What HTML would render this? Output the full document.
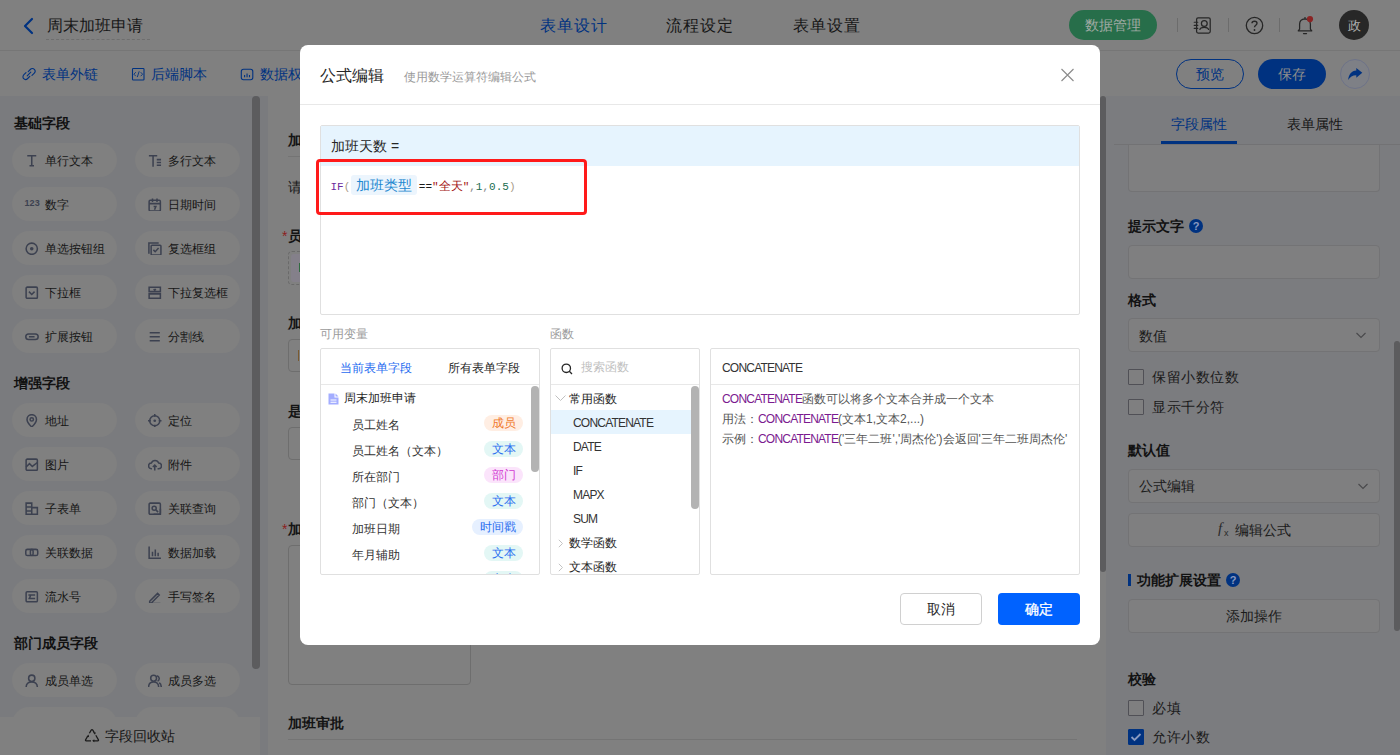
<!DOCTYPE html>
<html><head><meta charset="utf-8">
<style>
*{box-sizing:border-box;margin:0;padding:0}
html,body{width:1400px;height:755px;overflow:hidden;background:#808080;font-family:"Liberation Sans",sans-serif;color:#141414}
.a{position:absolute}
.t{position:absolute;white-space:nowrap;line-height:1}
/* header */
#hdr{left:0;top:0;width:1400px;height:51px;background:#808080;border-bottom:1px solid #767676}
#tb{left:0;top:51px;width:1400px;height:45px;background:#808080}
#lp{left:0;top:96px;width:268px;height:659px;background:#7a7b7e}
#cv{left:268px;top:96px;width:832px;height:659px;background:#808080}
#rp{left:1106px;top:96px;width:294px;height:659px;background:#7b7c7f}
.pill{position:absolute;width:105px;height:34px;border-radius:17px;background:#808080}
.pill .ic{position:absolute;left:13px;top:10.5px;width:13.5px;height:13.5px}
.pill .lb{position:absolute;left:33px;top:1px;line-height:34px;font-size:12px;color:#161616;white-space:nowrap}
.sh{position:absolute;left:14px;font-size:14px;font-weight:bold;color:#111;line-height:1}
.inp{position:absolute;left:1128px;width:252px;border:1px solid #737375;border-radius:4px;background:#7f7f80}
.rl{position:absolute;left:1128px;font-size:14px;font-weight:bold;color:#121212;line-height:1;white-space:nowrap}
.cb{position:absolute;left:1128px;width:16px;height:16px;border:1px solid #505056;border-radius:1px;background:#7f7f80}
.cbl{position:absolute;left:1152px;font-size:14px;color:#1a1a1a;line-height:1;white-space:nowrap;letter-spacing:0.5px}
#mask{left:0;top:0;width:1400px;height:755px}
/* modal */
#modal{left:300px;top:45px;width:800px;height:600px;background:#fff;border-radius:8px;overflow:hidden}
#modal .t{color:#262626}
.box{position:absolute;border:1px solid #e0e0e0;border-radius:2px;background:#fff}
.tag{position:absolute;right:16px;height:16px;border-radius:8px;font-size:12px;line-height:17px;padding:0 7.5px;white-space:nowrap}
.vr{position:absolute;left:31px;margin-top:1px;font-size:12px;line-height:1;color:#333;white-space:nowrap}
.fr{position:absolute;left:22px;font-size:12px;line-height:1;color:#333;white-space:nowrap;letter-spacing:-0.8px}
.mono{font-family:"Liberation Mono",monospace}
.fm{position:relative;top:2px}
</style></head><body>
<div class="a" id="hdr"></div>
<div class="a" id="tb"></div>
<div class="a" id="lp"></div>
<div class="a" id="cv"></div>
<div class="a" id="rp"></div>

<!-- header content -->
<svg class="a" style="left:20px;top:16px" width="16" height="20" viewBox="0 0 16 20"><path d="M12 3 L5 10 L12 17" fill="none" stroke="#003280" stroke-width="2.2" stroke-linecap="round" stroke-linejoin="round"/></svg>
<div class="t" style="left:47px;top:18px;font-size:16px;color:#161616">周末加班申请</div>
<div class="a" style="left:46px;top:39px;width:104px;border-top:1px dashed #6e6e6e"></div>
<div class="t" style="left:540px;top:18px;font-size:16px;color:#003280;letter-spacing:0.9px">表单设计</div>
<div class="t" style="left:666px;top:18px;font-size:16px;color:#161616;letter-spacing:0.9px">流程设定</div>
<div class="t" style="left:793px;top:18px;font-size:16px;color:#161616;letter-spacing:0.9px">表单设置</div>
<div class="a" style="left:1069px;top:10px;width:88px;height:30px;border-radius:15px;background:#276e4a"></div>
<div class="t" style="left:1085px;top:17.5px;font-size:14px;color:#a0aaa4">数据管理</div>
<div class="a" style="left:1177px;top:18px;width:1px;height:14px;background:#6c6c6c"></div>
<div class="a" style="left:1228px;top:18px;width:1px;height:14px;background:#6c6c6c"></div>
<div class="a" style="left:1279px;top:18px;width:1px;height:14px;background:#6c6c6c"></div>
<svg class="a" style="left:1192px;top:16px" width="20" height="19" viewBox="0 0 20 19"><rect x="4.6" y="1.8" width="13.6" height="15.2" rx="1.5" fill="none" stroke="#262626" stroke-width="1.25"/><circle cx="12.3" cy="7.5" r="2.9" fill="none" stroke="#262626" stroke-width="1.25"/><path d="M7.8 14 C8.2 10.6 16.2 10.6 16.6 14" fill="none" stroke="#262626" stroke-width="1.25"/><path d="M2.2 6.3h3.6M2.2 9.4h3.6M2.2 12.4h3.6" stroke="#262626" stroke-width="1.1" stroke-linecap="round"/></svg>
<svg class="a" style="left:1245px;top:16px" width="20" height="19" viewBox="0 0 20 19"><circle cx="9.5" cy="9.5" r="8.2" fill="none" stroke="#262626" stroke-width="1.3"/><path d="M7 7.3 C7 4.5 12 4.5 12 7.3 C12 9.2 9.5 9.3 9.5 11.3" fill="none" stroke="#262626" stroke-width="1.4"/><circle cx="9.5" cy="14" r="0.9" fill="#262626"/></svg>
<svg class="a" style="left:1296px;top:14px" width="20" height="22" viewBox="0 0 20 22"><path d="M2.2 16.8 L3.6 15.2 L3.6 10.3 C3.6 7 5.8 5 9 4.8 C12.2 5 14.4 7 14.4 10.3 L14.4 15.2 L15.8 16.8 Z" fill="none" stroke="#262626" stroke-width="1.25" stroke-linejoin="round"/><path d="M9 3 v1.8" stroke="#262626" stroke-width="1.2"/><path d="M7.5 19.5 h3" stroke="#262626" stroke-width="1.25" stroke-linecap="round"/><circle cx="14" cy="5.1" r="3.1" fill="#8a2424"/></svg>
<div class="a" style="left:1339px;top:10px;width:30px;height:30px;border-radius:15px;background:#272727"></div>
<div class="t" style="left:1347.5px;top:18.5px;font-size:13px;color:#b0b0b0">政</div>
<!-- toolbar -->
<svg class="a" style="left:22px;top:67px" width="14" height="14" viewBox="0 0 14 14"><path d="M6.2 4.6 L8.3 2.5 C9.5 1.3 11.3 1.3 12.3 2.3 C13.3 3.3 13.3 5.1 12.1 6.3 L10 8.4 M7.8 9.4 L5.7 11.5 C4.5 12.7 2.7 12.7 1.7 11.7 C0.7 10.7 0.7 8.9 1.9 7.7 L4 5.6 M5.2 8.8 L8.8 5.2" fill="none" stroke="#003280" stroke-width="1.1" stroke-linecap="round"/></svg>
<div class="t" style="left:42px;top:67px;font-size:14px;color:#003280">表单外链</div>
<svg class="a" style="left:131px;top:67px" width="14" height="14" viewBox="0 0 14 14"><rect x="1.5" y="1.5" width="11.5" height="11.5" rx="0.8" fill="none" stroke="#003280" stroke-width="1.1"/><path d="M4.8 5.2 L2.9 7.2 L4.8 9.2 M9.7 5.2 L11.6 7.2 L9.7 9.2 M8.2 4.3 L6.3 10.1" fill="none" stroke="#003280" stroke-width="0.9"/></svg>
<div class="t" style="left:151px;top:67px;font-size:14px;color:#003280">后端脚本</div>
<svg class="a" style="left:240px;top:68px" width="14" height="13" viewBox="0 0 14 13"><rect x="1.3" y="1.3" width="11.5" height="10.5" rx="2.2" fill="none" stroke="#003280" stroke-width="1.1"/><path d="M4.6 9.2 v-2.2 M7.05 9.2 v-3.8 M9.5 9.2 v-2.2" stroke="#003280" stroke-width="1.1"/></svg>
<div class="t" style="left:260px;top:67px;font-size:14px;color:#003280">数据权限</div>
<div class="a" style="left:1176px;top:59px;width:68px;height:30px;border-radius:15px;border:1px solid #003280"></div>
<div class="t" style="left:1196px;top:66.5px;font-size:14px;color:#003280">预览</div>
<div class="a" style="left:1258px;top:59px;width:68px;height:30px;border-radius:15px;background:#003280"></div>
<div class="t" style="left:1278px;top:66.5px;font-size:14px;color:#8c8c8c">保存</div>
<div class="a" style="left:1340px;top:59px;width:30px;height:30px;border-radius:15px;background:#7e8086;border:1px solid #6e7388"></div>
<svg class="a" style="left:1346px;top:65px" width="18" height="18" viewBox="0 0 18 18"><path d="M10.3 2.9 L16.3 7.8 L10.3 12.8 L10.3 10.2 C6.5 10.2 4 11.8 2.2 15 C2.6 9.5 5.5 5.8 10.3 5.5 Z" fill="#003280"/></svg>


<!-- left panel -->
<div class="sh" style="top:116px">基础字段</div>
<div class="sh" style="top:376px">增强字段</div>
<div class="sh" style="top:636px">部门成员字段</div>
<div class="pill" style="left:12px;top:143px"><svg class="ic" viewBox="0 0 12 12"><path d="M2 1.5h8M6 1.5v9M4 10.5h4" fill="none" stroke="#3c4150" stroke-width="1.35"/></svg><div class="lb">单行文本</div></div>
<div class="pill" style="left:135px;top:143px"><svg class="ic" viewBox="0 0 12 12"><path d="M0.8 1.5h7.4M4.5 1.5v9.8M7.8 5h3.8M7.8 7.5h3.8M7.8 10h3.8" fill="none" stroke="#3c4150" stroke-width="1.35"/></svg><div class="lb">多行文本</div></div>
<div class="pill" style="left:12px;top:187px"><div style="position:absolute;left:12.5px;top:12px;font-size:9px;font-weight:bold;line-height:9px;color:#3c4150;letter-spacing:0.1px">123</div><div class="lb">数字</div></div>
<div class="pill" style="left:135px;top:187px"><svg class="ic" viewBox="0 0 12 12"><rect x="1" y="2" width="10" height="9.5" rx="1" fill="none" stroke="#3c4150" stroke-width="1.35"/><path d="M1 5h10M4 0.5v3M8 0.5v3M5 7.5h2l-1.2 3" fill="none" stroke="#3c4150" stroke-width="1.35"/></svg><div class="lb">日期时间</div></div>
<div class="pill" style="left:12px;top:231px"><svg class="ic" viewBox="0 0 12 12"><circle cx="6" cy="6" r="5" fill="none" stroke="#3c4150" stroke-width="1.35"/><circle cx="6" cy="6" r="1.6" fill="#3c4150"/></svg><div class="lb">单选按钮组</div></div>
<div class="pill" style="left:135px;top:231px"><svg class="ic" viewBox="0 0 12 12"><path d="M0.8 10.5V0.8H9.5" fill="none" stroke="#3c4150" stroke-width="1.35"/><rect x="2.8" y="2.8" width="8.7" height="8.7" rx="0.8" fill="none" stroke="#3c4150" stroke-width="1.35"/><path d="M4.8 7l1.6 1.6 3-3.2" fill="none" stroke="#3c4150" stroke-width="1.35"/></svg><div class="lb">复选框组</div></div>
<div class="pill" style="left:12px;top:275px"><svg class="ic" viewBox="0 0 12 12"><rect x="1" y="1" width="10" height="10" rx="1" fill="none" stroke="#3c4150" stroke-width="1.35"/><path d="M3.5 5l2.5 2.5 2.5-2.5" fill="none" stroke="#3c4150" stroke-width="1.35"/></svg><div class="lb">下拉框</div></div>
<div class="pill" style="left:135px;top:275px"><svg class="ic" viewBox="0 0 12 12"><path d="M1 1.2h10v3.8H1zM1 7h10v4H1z" fill="none" stroke="#3c4150" stroke-width="1.35"/><path d="M5 2.8l1 1 1-1" fill="none" stroke="#3c4150" stroke-width="1.35"/></svg><div class="lb">下拉复选框</div></div>
<div class="pill" style="left:12px;top:319px"><svg class="ic" viewBox="0 0 12 12"><rect x="0.7" y="3.5" width="11" height="5" rx="2.5" fill="none" stroke="#3c4150" stroke-width="1.35"/><path d="M3.5 6h5" fill="none" stroke="#3c4150" stroke-width="1.35"/></svg><div class="lb">扩展按钮</div></div>
<div class="pill" style="left:135px;top:319px"><svg class="ic" viewBox="0 0 12 12"><path d="M1.5 2.5h9M1.5 6h9M1.5 9.5h9" fill="none" stroke="#3c4150" stroke-width="1.35"/></svg><div class="lb">分割线</div></div>
<div class="pill" style="left:12px;top:403px"><svg class="ic" viewBox="0 0 12 12"><path d="M6 11.5C6 11.5 1.8 7.5 1.8 4.8A4.2 4.2 0 0 1 10.2 4.8C10.2 7.5 6 11.5 6 11.5Z" fill="none" stroke="#3c4150" stroke-width="1.35"/><circle cx="6" cy="4.8" r="1.5" fill="none" stroke="#3c4150" stroke-width="1.35"/></svg><div class="lb">地址</div></div>
<div class="pill" style="left:135px;top:403px"><svg class="ic" viewBox="0 0 12 12"><circle cx="6" cy="6" r="4.5" fill="none" stroke="#3c4150" stroke-width="1.35"/><circle cx="6" cy="6" r="1.2" fill="#3c4150"/><path d="M6 0v2.5M6 9.5V12M0 6h2.5M9.5 6H12" fill="none" stroke="#3c4150" stroke-width="1.35"/></svg><div class="lb">定位</div></div>
<div class="pill" style="left:12px;top:447px"><svg class="ic" viewBox="0 0 12 12"><rect x="1" y="1" width="10" height="10" rx="1" fill="none" stroke="#3c4150" stroke-width="1.35"/><path d="M1 8l3-3 2.5 2.5L11 4" fill="none" stroke="#3c4150" stroke-width="1.35"/></svg><div class="lb">图片</div></div>
<div class="pill" style="left:135px;top:447px"><svg class="ic" viewBox="0 0 12 12"><path d="M3.5 9.5H3A2.5 2.5 0 0 1 3 4.5 3.5 3.5 0 0 1 9.5 4.5 2.5 2.5 0 0 1 9.5 9.5H8.5M6 11V6.5M4.3 8L6 6.3 7.7 8" fill="none" stroke="#3c4150" stroke-width="1.35"/></svg><div class="lb">附件</div></div>
<div class="pill" style="left:12px;top:491px"><svg class="ic" viewBox="0 0 12 12"><path d="M1 1h5v10H1zM6 5h5v6H6M1 4.5h5M1 8h5" fill="none" stroke="#3c4150" stroke-width="1.35"/></svg><div class="lb">子表单</div></div>
<div class="pill" style="left:135px;top:491px"><svg class="ic" viewBox="0 0 12 12"><rect x="1" y="1" width="10" height="10" rx="1" fill="none" stroke="#3c4150" stroke-width="1.35"/><circle cx="5.5" cy="5.5" r="1.8" fill="none" stroke="#3c4150" stroke-width="1.35"/><path d="M7 7l2 2M5 11h6V6" fill="none" stroke="#3c4150" stroke-width="1.35"/></svg><div class="lb">关联查询</div></div>
<div class="pill" style="left:12px;top:535px"><svg class="ic" viewBox="0 0 12 12"><rect x="0.7" y="3" width="6.5" height="5.5" rx="1.5" fill="none" stroke="#3c4150" stroke-width="1.35"/><rect x="4.8" y="3" width="6.5" height="5.5" rx="1.5" fill="none" stroke="#3c4150" stroke-width="1.35"/></svg><div class="lb">关联数据</div></div>
<div class="pill" style="left:135px;top:535px"><svg class="ic" viewBox="0 0 12 12"><path d="M1 0.5V11H11.5M4 9V5M6.5 9V3M9 9V6" fill="none" stroke="#3c4150" stroke-width="1.35"/></svg><div class="lb">数据加载</div></div>
<div class="pill" style="left:12px;top:579px"><svg class="ic" viewBox="0 0 12 12"><rect x="1" y="1.5" width="10" height="9" rx="1" fill="none" stroke="#3c4150" stroke-width="1.35"/><path d="M3 4.5h6M3 7.5h6M5 4.5l-1 3" fill="none" stroke="#3c4150" stroke-width="1.35"/></svg><div class="lb">流水号</div></div>
<div class="pill" style="left:135px;top:579px"><svg class="ic" viewBox="0 0 12 12"><path d="M1.5 10L8.5 3 10 4.5 3 11.5H1.5ZM1 12h10" fill="none" stroke="#3c4150" stroke-width="1.35"/></svg><div class="lb">手写签名</div></div>
<div class="pill" style="left:12px;top:663px"><svg class="ic" viewBox="0 0 12 12"><circle cx="6" cy="3.8" r="2.8" fill="none" stroke="#3c4150" stroke-width="1.35"/><path d="M1 12C1 8.5 3 7.2 6 7.2S11 8.5 11 12" fill="none" stroke="#3c4150" stroke-width="1.35"/></svg><div class="lb">成员单选</div></div>
<div class="pill" style="left:135px;top:663px"><svg class="ic" viewBox="0 0 12 12"><circle cx="5" cy="3.8" r="2.6" fill="none" stroke="#3c4150" stroke-width="1.35"/><path d="M0.5 12C0.5 8.8 2.2 7.2 5 7.2S9.5 8.8 9.5 12M7.8 1.5A2.6 2.6 0 0 1 8.5 6.4M10 7.8C11.3 8.5 11.8 10 11.8 12" fill="none" stroke="#3c4150" stroke-width="1.35"/></svg><div class="lb">成员多选</div></div>
<div class="pill" style="left:12px;top:707px"><svg class="ic" viewBox="0 0 12 12"><circle cx="6" cy="3.8" r="2.8" fill="none" stroke="#3c4150" stroke-width="1.35"/><path d="M1 12C1 8.5 3 7.2 6 7.2S11 8.5 11 12" fill="none" stroke="#3c4150" stroke-width="1.35"/></svg><div class="lb">部门单选</div></div>
<div class="pill" style="left:135px;top:707px"><svg class="ic" viewBox="0 0 12 12"><circle cx="5" cy="3.8" r="2.6" fill="none" stroke="#3c4150" stroke-width="1.35"/><path d="M0.5 12C0.5 8.8 2.2 7.2 5 7.2S9.5 8.8 9.5 12M7.8 1.5A2.6 2.6 0 0 1 8.5 6.4M10 7.8C11.3 8.5 11.8 10 11.8 12" fill="none" stroke="#3c4150" stroke-width="1.35"/></svg><div class="lb">部门多选</div></div>
<div class="a" style="left:252px;top:96px;width:8px;height:573px;border-radius:4px;background:#5c5c5e"></div>
<div class="a" style="left:0;top:717px;width:260px;height:38px;background:#808080"></div>
<svg class="a" style="left:84px;top:727px" width="16" height="16" viewBox="0 0 16 16"><path d="M7 13.8 H2.3 Q1 13.8 1.7 12.6 L3.8 9 M5.4 6.3 L7.2 3.1 Q8 1.9 8.8 3.1 L10.4 5.9 M11.8 8.3 L14.3 12.6 Q15 13.8 13.7 13.8 H9.5" fill="none" stroke="#1a1a1a" stroke-width="1.25"/><path d="M2.6 9.6 L4.6 7.6 L5.1 10.3Z M9.2 5.6 L11.9 5.6 L11 7.8Z M10.3 12.3 L10.3 15.3 L8.2 13.8Z" fill="#1a1a1a"/></svg>
<div class="t" style="left:105px;top:729px;font-size:14px;color:#161616">字段回收站</div>

<!-- center canvas -->
<div class="t" style="left:288px;top:133px;font-size:14px;font-weight:bold;color:#141414">加班申请</div>
<div class="a" style="left:288px;top:156px;width:812px;height:1px;background:#747474"></div>
<div class="t" style="left:288px;top:180px;font-size:14px;color:#1a1a1a">请填写</div>
<div class="t" style="left:282px;top:229px;font-size:14px;color:#8c2020">*</div>
<div class="t" style="left:288px;top:229px;font-size:14px;font-weight:bold;color:#141414">员工姓名</div>
<div class="a" style="left:288px;top:251px;width:180px;height:34px;border:1px dashed #6a6a6a;border-radius:4px"></div>
<div class="a" style="left:291px;top:254px;width:60px;height:28px;border-radius:3px;background:#84808a"></div>
<div class="a" style="left:298.5px;top:263px;width:2px;height:9px;background:#2f6a40"></div>
<div class="t" style="left:288px;top:316px;font-size:14px;font-weight:bold;color:#141414">加班日期</div>
<div class="a" style="left:288px;top:339px;width:180px;height:33px;border:1px solid #6e6e6e;border-radius:4px"></div>
<div class="a" style="left:298px;top:350px;width:1px;height:11px;background:#7a5a30"></div>
<div class="t" style="left:288px;top:404px;font-size:14px;font-weight:bold;color:#141414">是否</div>
<div class="a" style="left:288px;top:427px;width:180px;height:33px;border:1px solid #6e6e6e;border-radius:4px"></div>
<div class="t" style="left:282px;top:522px;font-size:14px;color:#8c2020">*</div>
<div class="t" style="left:288px;top:522px;font-size:14px;font-weight:bold;color:#141414">加班原因</div>
<div class="a" style="left:288px;top:545px;width:183px;height:140px;border:1px solid #6e6e6e;border-radius:4px"></div>
<div class="t" style="left:288px;top:716px;font-size:14px;font-weight:bold;color:#141414">加班审批</div>
<div class="a" style="left:288px;top:739px;width:789px;height:1px;background:#747474"></div>
<div class="a" style="left:1100px;top:96px;width:6px;height:476px;border-radius:3px;background:#5c5c5e"></div>

<!-- right panel -->
<div class="t" style="left:1171px;top:117px;font-size:14px;color:#003280">字段属性</div>
<div class="t" style="left:1287px;top:117px;font-size:14px;color:#161616">表单属性</div>
<div class="a" style="left:1114px;top:144px;width:286px;height:1px;background:#727274"></div>
<div class="inp" style="top:130px;height:62px;border-top:none"></div>
<div class="a" style="left:1106px;top:96px;width:294px;height:48px;background:#7b7c7f"></div>
<div class="t" style="left:1171px;top:117px;font-size:14px;color:#003280">字段属性</div>
<div class="t" style="left:1287px;top:117px;font-size:14px;color:#161616">表单属性</div>
<div class="a" style="left:1114px;top:144px;width:286px;height:1px;background:#727274"></div>
<div class="a" style="left:1161px;top:141px;width:76px;height:3px;background:#003280"></div>
<div class="rl" style="top:219px">提示文字</div>
<div class="a" style="left:1189px;top:219px;width:14px;height:14px;border-radius:7px;background:#003280;color:#8a9ac0;font-size:11px;font-weight:bold;line-height:14px;text-align:center">?</div>
<div class="inp" style="top:245px;height:34px"></div>
<div class="rl" style="top:293px">格式</div>
<div class="inp" style="top:318px;height:34px"></div>
<div class="t" style="left:1139px;top:329px;font-size:14px;color:#1a1a1a">数值</div>
<svg class="a" style="left:1355px;top:330px" width="12" height="10" viewBox="0 0 12 10"><path d="M1.5 3l4.5 4.5 4.5-4.5" fill="none" stroke="#4a4a4c" stroke-width="1.2"/></svg>
<div class="cb" style="top:369px"></div>
<div class="cbl" style="top:370px">保留小数位数</div>
<div class="cb" style="top:399px"></div>
<div class="cbl" style="top:400px">显示千分符</div>
<div class="rl" style="top:443px">默认值</div>
<div class="inp" style="top:469px;height:34px"></div>
<div class="t" style="left:1139px;top:479px;font-size:14px;color:#1a1a1a">公式编辑</div>
<svg class="a" style="left:1357px;top:481px" width="12" height="10" viewBox="0 0 12 10"><path d="M1.5 3l4.5 4.5 4.5-4.5" fill="none" stroke="#4a4a4c" stroke-width="1.2"/></svg>
<div class="inp" style="top:513px;height:34px"></div>
<div class="t" style="left:1218px;top:521px;font-size:15px;font-style:italic;font-family:'Liberation Serif',serif;color:#2a2a2a">f</div><div class="t" style="left:1224px;top:529px;font-size:9px;color:#2a2a2a">x</div>
<div class="t" style="left:1235px;top:523px;font-size:14px;color:#1a1a1a">编辑公式</div>
<div class="a" style="left:1128px;top:574px;width:3px;height:12px;background:#003280"></div>
<div class="rl" style="left:1137px;top:573px">功能扩展设置</div>
<div class="a" style="left:1226px;top:573px;width:14px;height:14px;border-radius:7px;background:#003280;color:#8a9ac0;font-size:11px;font-weight:bold;line-height:14px;text-align:center">?</div>
<div class="inp" style="top:599px;height:34px"></div>
<div class="t" style="left:1226px;top:609px;font-size:14px;color:#1a1a1a">添加操作</div>
<div class="rl" style="top:672px">校验</div>
<div class="cb" style="top:700px"></div>
<div class="cbl" style="top:701px">必填</div>
<div class="cb" style="top:729px;background:#003280;border-color:#003280"></div>
<svg class="a" style="left:1128px;top:729px" width="16" height="16" viewBox="0 0 16 16"><path d="M3.5 8l3 3 6-6" fill="none" stroke="#8a9ac0" stroke-width="1.8"/></svg>
<div class="cbl" style="top:730px">允许小数</div>
<div class="a" style="left:1394px;top:341px;width:6px;height:290px;border-radius:3px;background:#5c5c5e"></div>

<div class="a" id="modal">
<div class="t" style="left:20px;top:23px;font-size:16px;color:#262626">公式编辑</div>
<div class="t" style="left:104px;top:26px;font-size:12px;color:#9a9a9a">使用数学运算符编辑公式</div>
<svg class="a" style="left:760px;top:23px" width="15" height="14" viewBox="0 0 15 14"><path d="M1.5 1L13.5 13M13.5 1L1.5 13" stroke="#8c8c8c" stroke-width="1.15"/></svg>
<div class="a" style="left:0;top:59px;width:800px;height:1px;background:#e8e8e8"></div>
<!-- formula box -->
<div class="box" style="left:20px;top:80px;width:760px;height:190px"></div>
<div class="a" style="left:21px;top:81px;width:758px;height:40px;background:#e6f4fe"></div>
<div class="t" style="left:31px;top:94px;font-size:14px;color:#262626">加班天数 =</div>
<div class="a" style="left:16px;top:114px;width:271px;height:56px;border:3px solid #ff1a1a;border-radius:4px"></div>
<div class="a mono" style="left:30.5px;top:130px;height:20px;display:flex;align-items:center;font-size:11px;white-space:nowrap;line-height:20px"><span class="fm" style="color:#6b2c9c">IF</span><span class="fm" style="color:#a89a88">(</span><span style="display:inline-block;width:66px;height:20px;border-radius:3px;background:#ecf5fd;color:#1e88d0;font-family:'Liberation Sans',sans-serif;font-size:14px;line-height:20px;padding-left:5px;margin-left:0.5px">加班类型</span><span class="fm" style="color:#1a1a1a;margin-left:2px">==</span><span class="fm" style="color:#a31212">"<span style="font-size:12px">全天</span>"</span><span class="fm" style="color:#888">,</span><span class="fm" style="color:#1a6e50">1</span><span class="fm" style="color:#888">,</span><span class="fm" style="color:#1a6e50">0.5</span><span class="fm" style="color:#a89a88">)</span></div>
<!-- variables -->
<div class="t" style="left:20px;top:283px;font-size:12px;color:#9a9a9a">可用变量</div>
<div class="box" style="left:20px;top:303px;width:220px;height:227px;overflow:hidden">
  <div class="t" style="left:19px;top:13px;font-size:12px;color:#1f6cf0">当前表单字段</div>
  <div class="t" style="left:127px;top:13px;font-size:12px;color:#262626">所有表单字段</div>
  <div class="a" style="left:0;top:35px;width:218px;height:1px;background:#e8e8e8"></div>
  <svg class="a" style="left:7px;top:44px" width="11" height="12" viewBox="0 0 11 12"><path d="M0.5 0.5H6.5V4.5H10.5V11.5H0.5Z" fill="#a3adff"/><path d="M7.5 0.5L10.5 3.5H7.5Z" fill="#a3adff"/><path d="M2.5 7h6M2.5 9.3h6" stroke="#fff" stroke-width="1.1"/></svg>
  <div class="t" style="left:23px;top:43px;font-size:12px;color:#262626">周末加班申请</div>
  <div class="vr" style="top:69px">员工姓名</div><div class="tag" style="top:66px;background:#ffeee3;color:#f07a2a">成员</div>
  <div class="vr" style="top:95px">员工姓名（文本）</div><div class="tag" style="top:92px;background:#e3f7f5;color:#2b6ff0">文本</div>
  <div class="vr" style="top:121px">所在部门</div><div class="tag" style="top:118px;background:#fbe4fb;color:#d23ad2">部门</div>
  <div class="vr" style="top:147px">部门（文本）</div><div class="tag" style="top:144px;background:#e3f7f5;color:#2b6ff0">文本</div>
  <div class="vr" style="top:173px">加班日期</div><div class="tag" style="top:170px;background:#e6f0ff;color:#2b6ff0">时间戳</div>
  <div class="vr" style="top:199px">年月辅助</div><div class="tag" style="top:196px;background:#e3f7f5;color:#2b6ff0">文本</div>
  <div class="tag" style="top:222px;background:#e3f7f5;color:#2b6ff0">文本</div>
  <div class="a" style="left:210px;top:37px;width:8px;height:86px;border-radius:4px;background:#b3b3b3"></div>
</div>
<!-- functions -->
<div class="t" style="left:250px;top:283px;font-size:12px;color:#9a9a9a">函数</div>
<div class="box" style="left:250px;top:303px;width:150px;height:227px;overflow:hidden">
  <svg class="a" style="left:10px;top:14px" width="12" height="12" viewBox="0 0 12 12"><circle cx="5.3" cy="5.3" r="4.2" fill="none" stroke="#262626" stroke-width="1.3"/><path d="M8.3 8.3L11 11" stroke="#262626" stroke-width="1.3"/></svg>
  <div class="t" style="left:30px;top:12px;font-size:12px;color:#bfbfbf">搜索函数</div>
  <div class="a" style="left:0;top:35px;width:148px;height:1px;background:#e8e8e8"></div>
  <svg class="a" style="left:4px;top:46px" width="11" height="7" viewBox="0 0 11 7"><path d="M0.5 0.5L5.5 5.5 10.5 0.5" fill="none" stroke="#c0c0c0" stroke-width="1"/></svg>
  <div class="t" style="left:18px;top:44px;font-size:12px;color:#262626">常用函数</div>
  <div class="a" style="left:0;top:61px;width:140px;height:24px;background:#e6f4fe"></div>
  <div class="fr" style="top:68px">CONCATENATE</div>
  <div class="fr" style="top:92px">DATE</div>
  <div class="fr" style="top:116px">IF</div>
  <div class="fr" style="top:140px">MAPX</div>
  <div class="fr" style="top:164px">SUM</div>
  <svg class="a" style="left:7px;top:190px" width="6" height="9" viewBox="0 0 6 9"><path d="M0.8 0.8L4.5 4.5 0.8 8.2" fill="none" stroke="#c4c4c4" stroke-width="1"/></svg>
  <div class="t" style="left:18px;top:188px;font-size:12px;color:#262626">数学函数</div>
  <svg class="a" style="left:7px;top:214px" width="6" height="9" viewBox="0 0 6 9"><path d="M0.8 0.8L4.5 4.5 0.8 8.2" fill="none" stroke="#c4c4c4" stroke-width="1"/></svg>
  <div class="t" style="left:18px;top:212px;font-size:12px;color:#262626">文本函数</div>
  <div class="a" style="left:140px;top:37px;width:8px;height:123px;border-radius:4px;background:#b3b3b3"></div>
</div>
<!-- detail -->
<div class="box" style="left:410px;top:303px;width:370px;height:227px">
  <div class="fr" style="left:11px;top:13px">CONCATENATE</div>
  <div class="a" style="left:0;top:35px;width:368px;height:1px;background:#e8e8e8"></div>
  <div class="fr" style="left:11px;top:44px;color:#555;letter-spacing:0"><span style="color:#7b1a8f;letter-spacing:-0.8px">CONCATENATE</span>函数可以将多个文本合并成一个文本</div>
  <div class="fr" style="left:11px;top:64px;color:#555;letter-spacing:0">用法：<span style="color:#7b1a8f;letter-spacing:-0.8px">CONCATENATE</span>(文本1,文本2,...)</div>
  <div class="fr" style="left:11px;top:84px;color:#555;letter-spacing:0">示例：<span style="color:#7b1a8f;letter-spacing:-0.8px">CONCATENATE</span>('三年二班','周杰伦')会返回'三年二班周杰伦'</div>
</div>
<div class="a" style="left:600px;top:548px;width:82px;height:32px;border:1px solid #d0d0d0;border-radius:4px;background:#fff"></div>
<div class="t" style="left:627px;top:557px;font-size:14px;color:#262626">取消</div>
<div class="a" style="left:698px;top:548px;width:82px;height:32px;border-radius:4px;background:#0062ff"></div>
<div class="t" style="left:725px;top:557px;font-size:14px;color:#fff;-webkit-text-stroke:0.3px #fff">确定</div>
</div>
</body></html>
